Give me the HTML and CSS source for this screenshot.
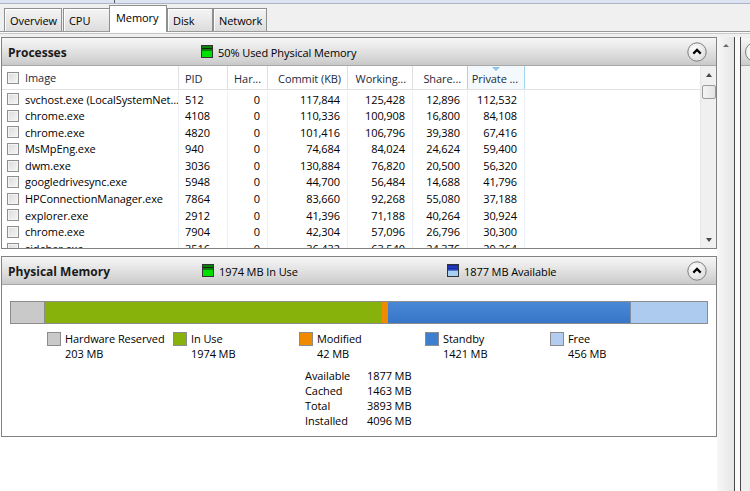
FILE: index.html
```html
<!DOCTYPE html>
<html>
<head>
<meta charset="utf-8">
<title>Resource Monitor - Memory</title>
<link rel="stylesheet" href="styles.css">
</head>
<body>
<div class="topbar"><span class="topbar-tick"></span></div>
<nav class="tabstrip">
  <div class="tab tab-overview">Overview</div>
  <div class="tab tab-cpu">CPU</div>
  <div class="tab tab-memory selected">Memory</div>
  <div class="tab tab-disk">Disk</div>
  <div class="tab tab-network">Network</div>
</nav>
<div class="tabsep"></div>
<div class="main">
  <div class="left">
    <section class="panel panel-proc">
      <header class="phead">
        <span class="ptitle">Processes</span>
        <span class="ind">
          <svg class="ind-icon" width="12" height="13" viewBox="0 0 12 13"><rect x="0.5" y="0.5" width="11" height="12" fill="#00e000" stroke="#333"/><path d="M1 2h10M1 3.5h10M1 5h10" stroke="#111" stroke-width="0.9"/></svg>
          <span class="itext">50% Used Physical Memory</span>
        </span>
        <span class="spacer"></span>
        <span class="collapse"><svg width="20" height="20" viewBox="0 0 20 20"><defs><radialGradient id="cg1" cx="0.4" cy="0.35" r="0.7"><stop offset="0" stop-color="#ffffff"/><stop offset="1" stop-color="#dcdcdc"/></radialGradient></defs><circle cx="10" cy="10" r="9.2" fill="url(#cg1)" stroke="#7d7d7d"/><path d="M6.3 11.6 L10 7.9 L13.7 11.6" fill="none" stroke="#000" stroke-width="2.2"/></svg></span>
      </header>
      <div class="tablewrap">
        <div class="grid">
          <div class="row hrow">
            <div class="c img"><span class="chk"></span>Image</div>
            <div class="c">PID</div>
            <div class="c n">Har...</div>
            <div class="c n">Commit (KB)</div>
            <div class="c n">Working...</div>
            <div class="c n">Share...</div>
            <div class="c n sorted"><span class="sortarrow"></span>Private ...</div>
            <div class="c last"></div>
          </div>
          <div class="row"><div class="c img"><span class="chk"></span>svchost.exe (LocalSystemNet...</div><div class="c">512</div><div class="c n">0</div><div class="c n">117,844</div><div class="c n">125,428</div><div class="c n">12,896</div><div class="c n">112,532</div><div class="c last"></div></div>
          <div class="row"><div class="c img"><span class="chk"></span>chrome.exe</div><div class="c">4108</div><div class="c n">0</div><div class="c n">110,336</div><div class="c n">100,908</div><div class="c n">16,800</div><div class="c n">84,108</div><div class="c last"></div></div>
          <div class="row"><div class="c img"><span class="chk"></span>chrome.exe</div><div class="c">4820</div><div class="c n">0</div><div class="c n">101,416</div><div class="c n">106,796</div><div class="c n">39,380</div><div class="c n">67,416</div><div class="c last"></div></div>
          <div class="row"><div class="c img"><span class="chk"></span>MsMpEng.exe</div><div class="c">940</div><div class="c n">0</div><div class="c n">74,684</div><div class="c n">84,024</div><div class="c n">24,624</div><div class="c n">59,400</div><div class="c last"></div></div>
          <div class="row"><div class="c img"><span class="chk"></span>dwm.exe</div><div class="c">3036</div><div class="c n">0</div><div class="c n">130,884</div><div class="c n">76,820</div><div class="c n">20,500</div><div class="c n">56,320</div><div class="c last"></div></div>
          <div class="row"><div class="c img"><span class="chk"></span>googledrivesync.exe</div><div class="c">5948</div><div class="c n">0</div><div class="c n">44,700</div><div class="c n">56,484</div><div class="c n">14,688</div><div class="c n">41,796</div><div class="c last"></div></div>
          <div class="row"><div class="c img"><span class="chk"></span>HPConnectionManager.exe</div><div class="c">7864</div><div class="c n">0</div><div class="c n">83,660</div><div class="c n">92,268</div><div class="c n">55,080</div><div class="c n">37,188</div><div class="c last"></div></div>
          <div class="row"><div class="c img"><span class="chk"></span>explorer.exe</div><div class="c">2912</div><div class="c n">0</div><div class="c n">41,396</div><div class="c n">71,188</div><div class="c n">40,264</div><div class="c n">30,924</div><div class="c last"></div></div>
          <div class="row"><div class="c img"><span class="chk"></span>chrome.exe</div><div class="c">7904</div><div class="c n">0</div><div class="c n">42,304</div><div class="c n">57,096</div><div class="c n">26,796</div><div class="c n">30,300</div><div class="c last"></div></div>
          <div class="row"><div class="c img"><span class="chk"></span>sidebar.exe</div><div class="c">3516</div><div class="c n">0</div><div class="c n">36,432</div><div class="c n">63,540</div><div class="c n">24,376</div><div class="c n">29,264</div><div class="c last"></div></div>
        </div>
        <div class="vscroll">
          <span class="arrow-up"></span>
          <span class="thumb"></span>
          <span class="vspace"></span>
          <span class="arrow-down"></span>
        </div>
      </div>
    </section>

    <section class="panel panel-mem">
      <header class="phead mhead">
        <span class="ptitle">Physical Memory</span>
        <span class="ind ind-inuse">
          <svg class="ind-icon" width="12" height="13" viewBox="0 0 12 13"><rect x="0.5" y="0.5" width="11" height="12" fill="#00e000" stroke="#333"/><path d="M1 2h10M1 3.5h10M1 5h10" stroke="#111" stroke-width="0.9"/></svg>
          <span class="itext">1974 MB In Use</span>
        </span>
        <span class="ind">
          <svg class="ind-icon" width="12" height="13" viewBox="0 0 12 13"><rect x="0.5" y="0.5" width="11" height="12" fill="#a8d0f6" stroke="#333"/><rect x="1" y="1" width="10" height="5.5" fill="#0a1a8a"/><path d="M1 2.2h10M1 3.8h10M1 5.4h10" stroke="#3c5cf0" stroke-width="0.7"/></svg>
          <span class="itext">1877 MB Available</span>
        </span>
        <span class="spacer"></span>
        <span class="collapse"><svg width="20" height="20" viewBox="0 0 20 20"><defs><radialGradient id="cg2" cx="0.4" cy="0.35" r="0.7"><stop offset="0" stop-color="#ffffff"/><stop offset="1" stop-color="#dcdcdc"/></radialGradient></defs><circle cx="10" cy="10" r="9.2" fill="url(#cg2)" stroke="#7d7d7d"/><path d="M6.3 11.6 L10 7.9 L13.7 11.6" fill="none" stroke="#000" stroke-width="2.2"/></svg></span>
      </header>
      <div class="membody">
        <div class="membar">
          <span class="seg seg-hw" style="width:34px"></span>
          <span class="seg seg-use" style="width:337px"></span>
          <span class="seg seg-mod" style="width:6px"></span>
          <span class="seg seg-sb" style="width:243px"></span>
          <span class="seg seg-free"></span>
        </div>
        <div class="legend">
          <div class="litem"><span class="sw sw-hw"></span><div class="ltext">Hardware Reserved<br>203 MB</div></div>
          <div class="litem"><span class="sw sw-use"></span><div class="ltext">In Use<br>1974 MB</div></div>
          <div class="litem"><span class="sw sw-mod"></span><div class="ltext">Modified<br>42 MB</div></div>
          <div class="litem"><span class="sw sw-sb"></span><div class="ltext">Standby<br>1421 MB</div></div>
          <div class="litem"><span class="sw sw-free"></span><div class="ltext">Free<br>456 MB</div></div>
        </div>
        <div class="stats">
          <span>Available</span><span>1877 MB</span>
          <span>Cached</span><span>1463 MB</span>
          <span>Total</span><span>3893 MB</span>
          <span>Installed</span><span>4096 MB</span>
        </div>
      </div>
    </section>
  </div>
  <div class="right">
    <div class="rscroll"><span class="rarrow"></span></div>
    <div class="rline"></div>
    <div class="rgap"></div>
    <div class="rline"></div>
    <div class="rpanel">
      <div class="rphead"><span class="rcircle"></span></div>
    </div>
  </div>
</div>
</body>
</html>
```

FILE: styles.css
```css
* { box-sizing: border-box; }
html, body { margin: 0; padding: 0; }
body {
  width: 750px;
  height: 491px;
  overflow: hidden;
  background: #f0f0f0;
  font-family: "Open Sans", "Noto Sans", sans-serif;
  font-size: 11px;
  letter-spacing: -0.08px;
  color: #000;
}

.topbar {
  height: 4px;
  background: #dde4f1;
  border-bottom: 1px solid #aab5c8;
  position: relative;
}
.topbar-tick {
  position: absolute;
  left: 114px;
  top: 0;
  width: 1px;
  height: 3px;
  background: #555;
}

.tabstrip {
  display: flex;
  align-items: flex-end;
  height: 28px;
  padding-left: 4px;
  border-bottom: 1px solid #9a9a9a;
}
.tab {
  height: 23px;
  padding-top: 2px;
  line-height: 19px;
  padding-left: 5px;
  border: 1px solid #8e8f8f;
  border-bottom: none;
  background: linear-gradient(#f4f4f4, #e9e9e9 50%, #dcdcdc);
  box-shadow: inset 1px 1px 0 #fff;
  white-space: nowrap;
}
.tab-overview { width: 58px; }
.tab-cpu { width: 47px; margin-left: 1px; }
.tab-memory { width: 58px; margin-left: -1px; }
.tab-disk { width: 46px; margin-left: 0; }
.tab-network { width: 54px; margin-left: 0; }
.tab.selected {
  height: 27px;
  padding-top: 2px;
  line-height: 20px;
  margin-bottom: -1px;
  background: #fff;
  box-shadow: none;
  padding-left: 6px;
  position: relative;
  z-index: 1;
}

.tabsep {
  height: 2px;
  border-bottom: 1px solid #c9c9c9;
  background: #fafafa;
}

.main {
  display: flex;
  height: 457px;
  padding-top: 3px;
  background: #f0f0f0;
}
.left {
  width: 717px;
  padding-left: 1px;
  background: #fff;
  display: flex;
  flex-direction: column;
  gap: 7px;
}

.panel {
  border: 1px solid #828282;
  background: #fff;
  overflow: hidden;
}
.panel-proc { height: 212px; }
.panel-mem { height: 181px; }

.phead {
  height: 28px;
  display: flex;
  align-items: center;
  padding-left: 6px;
  padding-right: 9px;
  background: linear-gradient(#f6f6f6, #e8e8e8 35%, #d4d4d4 80%, #c8c8c8);
  border-bottom: 1px solid #a8a8a8;
}
.ptitle {
  width: 193px;
  font-weight: 700;
  font-size: 12px;
  letter-spacing: 0;
  color: #1a1a1a;
  padding-top: 2px;
}
.ind {
  display: flex;
  align-items: center;
  gap: 5px;
  white-space: nowrap;
}
.itext { padding-top: 2px; }
.ind-icon { display: block; }
.ind-inuse { width: 245px; }
.mhead .ptitle { width: 194px; }
.spacer { flex: 1; }
.collapse { display: block; width: 20px; height: 20px; margin-top: 1px; }
.collapse svg { display: block; }

.tablewrap {
  display: flex;
  height: 182px;
}
.grid {
  flex: 1;
  overflow: hidden;
}
.row {
  display: grid;
  grid-template-columns: 177px 49px 40px 80px 65px 55px 57px 1fr;
  height: 16.6px;
  white-space: nowrap;
}
.row .c {
  border-right: 1px solid #edf2f9;
  padding-left: 6px;
  padding-top: 0.5px;
  line-height: 15.6px;
  overflow: hidden;
}
.row .c.n {
  text-align: right;
  padding-left: 0;
  padding-right: 7px;
}
.row .c.last { border-right: none; }
.row .c.img {
  display: flex;
  align-items: center;
  padding-left: 5px;
  padding-top: 0;
}
.row:nth-child(2) { margin-top: 1px; }

.hrow {
  height: 24px;
  border-bottom: 1px solid #e2e2e2;
  color: #1b2a3c;
}
.hrow .c {
  border-right: 1px solid #e0e0e0;
  position: relative;
  padding-top: 2px;
  line-height: 21px;
}
.hrow .c.n { padding-right: 6px; }
.hrow .c.sorted {
  background: #f4f9fe;
  border-left: 1px solid #a3d5f2;
  border-right: 1px solid #a3d5f2;
  margin-left: -1px;
  padding-right: 6px;
}
.sortarrow {
  position: absolute;
  left: 24px;
  top: 1px;
  width: 0;
  height: 0;
  border-left: 4px solid transparent;
  border-right: 4px solid transparent;
  border-top: 4px solid #8fc2e6;
}

.chk {
  display: inline-block;
  width: 12px;
  height: 12px;
  margin-right: 6px;
  border: 1px solid #8f8f8f;
  background: linear-gradient(135deg, #dcdcdc, #f6f6f6);
  box-shadow: inset 0 0 0 1px #f4f4f4;
  flex: none;
}

.vscroll {
  width: 16px;
  display: flex;
  flex-direction: column;
  align-items: center;
  background: #f0f0f0;
  border-left: 1px solid #e6e6e6;
}
.arrow-up {
  margin-top: 7px;
  width: 0; height: 0;
  border-left: 3.5px solid transparent;
  border-right: 3.5px solid transparent;
  border-bottom: 4px solid #4a4a4a;
}
.thumb {
  margin-top: 8px;
  width: 14px;
  height: 14px;
  border: 1px solid #9a9a9a;
  border-radius: 2px;
  background: linear-gradient(90deg, #f4f4f4, #e4e4e4);
}
.vspace { flex: 1; }
.arrow-down {
  margin-bottom: 6px;
  width: 0; height: 0;
  border-left: 3.5px solid transparent;
  border-right: 3.5px solid transparent;
  border-top: 4px solid #4a4a4a;
}

.membody {
  padding: 16px 8px 0 8px;
}
.membar {
  display: flex;
  height: 23px;
  border: 1px solid #8c8c8c;
}
.seg { display: block; height: 100%; }
.seg-hw { background: #c9c9c9; border-right: 1px solid #8c8c8c; }
.seg-use { background: #87b20b; }
.seg-mod { background: #f08a00; }
.seg-sb { background: linear-gradient(#4a88d6, #3775c8); border-right: 1px solid #7c8ea6; }
.seg-free { flex: 1; background: #adcbef; }

.legend {
  display: flex;
  padding-left: 37px;
  margin-top: 8px;
}
.litem {
  width: 126px;
  display: flex;
  gap: 4px;
}
.litem:nth-child(4) { width: 125px; }
.sw {
  width: 14px;
  height: 14px;
  border: 1px solid #8c8c8c;
  flex: none;
}
.sw-hw { background: #c9c9c9; }
.sw-use { background: #87b20b; }
.sw-mod { background: #f08a00; }
.sw-sb { background: #3f7fcf; }
.sw-free { background: #b2cdf0; }
.ltext {
  line-height: 14.6px;
  margin-top: 0;
  white-space: nowrap;
}

.stats {
  display: grid;
  grid-template-columns: 62px auto;
  width: 140px;
  margin-left: 295px;
  margin-top: 7px;
  line-height: 15px;
}

.right {
  flex: 1;
  display: flex;
  background: #f0f0f0;
}
.rscroll {
  width: 17px;
  background: linear-gradient(90deg, #f7f7f7, #e6e6e6);
  display: flex;
  justify-content: center;
}
.rarrow {
  margin-top: 7px;
  width: 0; height: 0;
  border-left: 3px solid transparent;
  border-right: 3px solid transparent;
  border-bottom: 3px solid #6a6a6a;
}
.rline { width: 1px; background: #4a4a4a; }
.rgap { width: 5px; background: #fbfbfb; }
.rpanel {
  flex: 1;
  background: #efefef;
  overflow: hidden;
}
.rphead {
  height: 28px;
  margin-top: 1px;
  background: linear-gradient(#f6f6f6, #e2e2e2 50%, #cbcbcb);
  position: relative;
  border-bottom: 1px solid #a8a8a8;
}
.rcircle {
  position: absolute;
  left: 4px;
  top: 4px;
  width: 20px;
  height: 20px;
  border-radius: 50%;
  border: 1px solid #7d7d7d;
  background: #f4f4f4;
}
```
